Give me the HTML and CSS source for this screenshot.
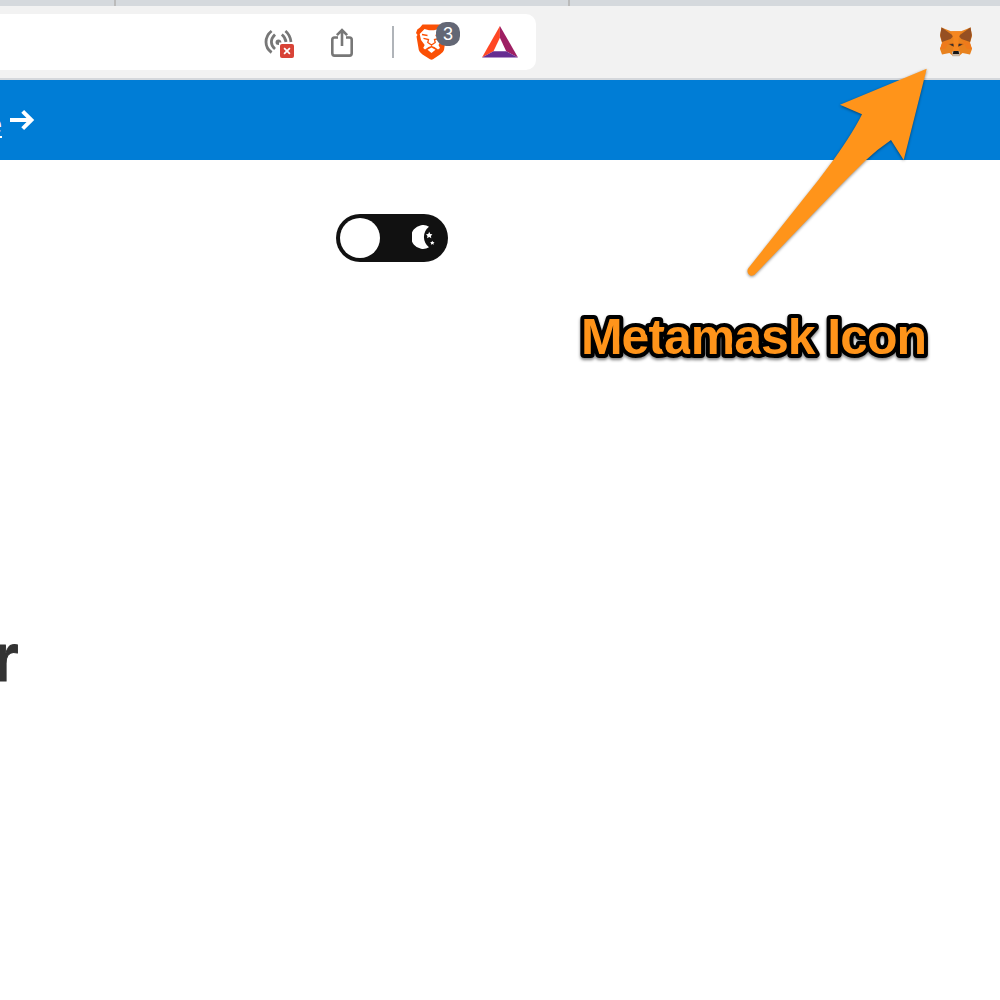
FILE: index.html
```html
<!DOCTYPE html>
<html lang="en">
<head>
<meta charset="utf-8">
<title>Metamask Icon</title>
<link rel="stylesheet" href="styles.css">
</head>
<body>
<div class="tabs"><span class="tab tab-first"></span><span class="tab tab-active"></span></div>
<header class="toolbar">
  <div class="address">
    <svg class="cast" width="32" height="32" viewBox="263 27 32 32" fill="none">
      <g stroke="#777" stroke-width="2.8">
        <path d="M271.600 31Q266 35.400 266 42Q266 48.500 271.600 52.500"/>
        <path d="M275 34.500Q271.400 38 271.400 42Q271.400 46 275 49"/>
        <path d="M285.400 31Q290.300 35 291 42"/>
        <path d="M281.800 34.500Q285.500 37.500 286 42"/>
      </g>
      <path d="M275.500 42.500Q275.500 39.500 278.500 39.500Q281 39.500 281.500 42.500H279V45Q275.500 45 275.500 42.500Z" fill="#777"/>
      <rect x="280" y="44" width="14" height="14" rx="2" fill="#d84337"/>
      <path d="M284.100 48.100L289.900 53.900M289.900 48.100L284.100 53.900" stroke="#fff" stroke-width="1.700"/>
    </svg>
    <svg class="share" width="24" height="30" viewBox="330 28 24 30" fill="none" stroke="#777" stroke-width="2.600">
      <path d="M338 37.500H334.500Q332.300 37.500 332.300 39.800V53.300Q332.300 55.600 334.500 55.600H349.500Q351.700 55.600 351.700 53.300V39.800Q351.700 37.500 349.500 37.500H346"/>
      <path d="M342 46V30.500M336.900 35.200L342 30L347.100 35.200"/>
    </svg>
    <span class="divider"></span>
    <div class="shield">
      <svg width="32" height="38" viewBox="415 23 32 38">
        <path d="M422.500 24.500H440.500L443.500 28L446.200 29.500L447 33L446 37L444 50Q443.300 52.500 440 54.500L433 59.300Q431.500 60.200 430 59.300L422.500 54.500Q419.500 52.500 418.800 50L416.500 36.500L417.500 35L416 33L417.300 29.500L420 27.500Z" fill="#fb5005"/>
        <path d="M424.500 29L429 30.200H434L438.500 29L442.500 34L441.500 37L440.500 41.500L438.500 45L440 48L438 49.500L434.500 47L431.500 46L428.500 47L425 49.500L423.200 48L424.700 45L421 40L419.700 34Z" fill="#fff"/>
        <path d="M427.500 49.800L431.500 47.500L435.500 49.800L431.500 53Z" fill="#fff"/>
        <path d="M422 34.500L427.500 35.500M435.500 35.500L441 34.500M423.500 38.300L428.500 39.500L427.800 42.500L431.500 45L435.200 42.500L434.500 39.500L439.500 38.300M431.500 44.500V47" fill="none" stroke="#fb5005" stroke-width="1.300"/>
      </svg>
      <span class="badge">3</span>
    </div>
    <svg class="bat" width="36" height="32" viewBox="482 25.500 36 32">
      <path d="M499.900 25.500V37.200L493.500 50.800L482 57Z" fill="#ff4724"/>
      <path d="M499.900 25.500L518 57L506.200 50.800L499.900 37.200Z" fill="#9e1f63"/>
      <path d="M482 57L493.500 50.800H506.200L518 57Z" fill="#662d91"/>
    </svg>
  </div>
  <svg class="fox" width="32" height="30" viewBox="940 27 32 30">
    <path d="M941.500 27.500L951 31.200H961L970.500 27.500L972 36L970 43L972 49L970 54.500L962.500 53L959 56H953L949.500 53L942 54.500L940 49L942 43L940 36Z" fill="#e8821e"/>
    <path d="M941.500 27.300L953.500 36L950.500 39L942 42L941.200 39L940.200 35Z" fill="#965022"/>
    <path d="M970.500 27.300L958.500 36L961.500 39L970 42L970.800 39L971.800 35Z" fill="#965022"/>
    <path d="M951 31.200H961L958.500 39L959 51H953L953.500 39Z" fill="#f58720"/>
    <path d="M942 43L950 40L945 49H940ZM970 43L962 40L967 49H972Z" fill="#ef7a1b"/>
    <path d="M948 44L953 43L954 47ZM964 44L959 43L958 47Z" fill="#cd6116"/>
    <path d="M949.500 44.500L953.300 43.800L953.700 46.500ZM962.500 44.500L958.700 43.800L958.300 46.500Z" fill="#34302d"/>
    <path d="M952 52L953.500 51H958.500L960 52L959.500 56.200H952.500Z" fill="#c6b6a5"/>
    <path d="M953.500 51H958.500L959.200 54H952.800Z" fill="#171717"/>
  </svg>
</header>
<div class="banner">
  <span class="link">e</span>
  <svg class="next" width="25" height="22" viewBox="10 109 25 22" fill="none" stroke="#fff" stroke-width="4">
    <path d="M10 120H31.500M22.700 111.300L31.400 120L22.700 128.700"/>
  </svg>
</div>
<main class="page">
  <div class="toggle">
    <span class="knob"></span>
    <svg class="moon" width="24" height="26" viewBox="412 225 24 26" fill="#fff">
      <path d="M429 226.700A11.800 12 0 1 0 429 247.300A13 13 0 0 1 429 226.700Z"/>
      <path d="M429.200 231.800L430.200 234L432.400 234.300L430.900 235.900L431.300 238.200L429.200 237.100L427.100 238.200L427.500 235.900L426 234.300L428.200 234Z"/>
      <path d="M432.300 240.700L433 242L434.500 242.200L433.500 243.300L433.700 244.700L432.300 244L430.900 244.700L431.100 243.300L430.100 242.200L431.600 242Z"/>
    </svg>
  </div>
  <h1 class="heading">r</h1>
</main>
<svg class="annotation" width="1000" height="400" viewBox="0 0 1000 400">
  <path class="arrow" d="M926.700 68.700L840 104.700L862 114.300Q854 131 834 159.300Q819 180 801.700 201L748.300 268.300C745.300 272.500 751 278.500 755 274.300L835 191Q850 175.500 866 160Q877 149.500 891 140L903.700 160Z"/>
  <text class="caption" x="581" y="353.500" textLength="346" lengthAdjust="spacing">Metamask Icon</text>
</svg>
</body>
</html>
```
FILE: styles.css
```css
body {
  margin: 0;
  height: 1000px;
  overflow: hidden;
  background: #fff;
  font-family: "Liberation Sans", Arial, sans-serif;
}
svg { display: block; flex: none; }
.tabs { display: flex; height: 6px; background: #d5d9dd; }
.tab { box-sizing: border-box; border-right: 2px solid #bbb; }
.tab-first { width: 116px; }
.tab-active { width: 454px; }
.toolbar {
  box-sizing: border-box;
  display: flex;
  justify-content: space-between;
  height: 74px;
  padding: 8px 28px 0 0;
  background: #f2f2f2;
  border-bottom: 2px solid #d5d8dc;
}
.address {
  box-sizing: border-box;
  display: flex;
  align-items: flex-start;
  width: 536px;
  height: 56px;
  padding-left: 263px;
  background: #fff;
  border-radius: 0 10px 10px 0;
}
.cast { margin-top: 13px; }
.share { margin: 14px 0 0 35px; }
.divider { width: 2px; height: 32px; margin: 12px 0 0 38px; background: #b0b4b9; }
.shield { position: relative; margin: 9px 0 0 21px; }
.badge {
  position: absolute;
  left: 21px;
  top: -1px;
  width: 24px;
  height: 24px;
  border-radius: 10px;
  background: #636775;
  color: #fff;
  font-size: 18px;
  line-height: 24px;
  text-align: center;
}
.bat { margin: 12px 0 0 35px; }
.fox { margin-top: 13px; }
.banner {
  display: flex;
  align-items: center;
  height: 80px;
  background: #007dd6;
  color: #fff;
}
.link {
  display: flex;
  justify-content: flex-end;
  width: 2px;
  height: 22px;
  margin: 12px 8px 0 0;
  border-bottom: 2px solid #fff;
  font-size: 28px;
  line-height: 22px;
}
.page { padding-top: 54px; }
.toggle {
  box-sizing: border-box;
  display: flex;
  justify-content: space-between;
  align-items: center;
  width: 112px;
  height: 48px;
  margin-left: 336px;
  padding: 0 12px 0 4px;
  border-radius: 24px;
  background: #111;
}
.knob { width: 40px; height: 40px; border-radius: 50%; background: #fff; }
.heading {
  margin: 353px 0 0 -8px;
  color: #333;
  font-size: 68px;
  line-height: 84px;
  -webkit-text-stroke: 1px #333;
}
.annotation { position: absolute; left: 0; top: 0; }
.arrow { fill: #ff941a; filter: drop-shadow(0 1px 1.5px rgba(0, 0, 0, .45)); }
.caption {
  fill: #ff941a;
  stroke: #000;
  stroke-width: 8px;
  stroke-linejoin: round;
  paint-order: stroke;
  font-size: 50px;
  font-weight: bold;
  filter: drop-shadow(0 2px 1.5px rgba(0, 0, 0, .5));
}
```
